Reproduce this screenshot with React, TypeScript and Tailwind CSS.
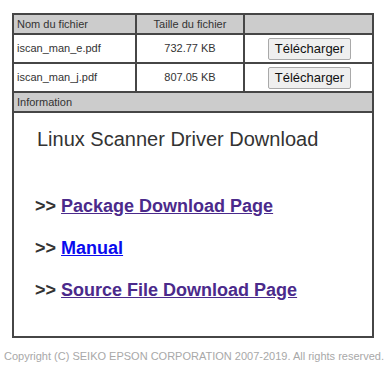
import React from "react";

const files = [
  { name: "iscan_man_e.pdf", size: "732.77 KB" },
  { name: "iscan_man_j.pdf", size: "807.05 KB" },
];

const links = [
  { label: "Package Download Page", visited: true },
  { label: "Manual", visited: false },
  { label: "Source File Download Page", visited: true },
];

const App = () => {
  return (
    <div className="w-[388px] h-[375px] bg-white pt-[13px] font-['Liberation_Sans',Arial,sans-serif] text-[#333]">
      <div className="ml-[12px] w-[362px] grid grid-cols-[121px_106px_127px] gap-[2px] p-[2px] bg-[#464646] text-[11px]">
        <div className="h-[18px] bg-[#cccccc] flex items-center pl-[3px]">Nom du fichier</div>
        <div className="h-[18px] bg-[#cccccc] flex items-center justify-center">Taille du fichier</div>
        <div className="h-[18px] bg-[#cccccc]"></div>

        {files.map((f) => (
          <React.Fragment key={f.name}>
            <div className="h-[27px] bg-white flex items-center pl-[3px]">{f.name}</div>
            <div className="h-[27px] bg-white flex items-center justify-center">{f.size}</div>
            <div className="h-[27px] bg-white flex items-center justify-center">
              <button className="h-[22px] px-[6px] ml-[2px] text-[13px] leading-none text-[#111] bg-[#efefef] border border-[#a9a9a9] rounded-[2px]">
                Télécharger
              </button>
            </div>
          </React.Fragment>
        ))}

        <div className="col-span-3 h-[18px] bg-[#cccccc] flex items-center pl-[3px]">Information</div>

        <div className="col-span-3 h-[223px] bg-white">
          <h1 className="mt-[15px] pl-[23px] text-[20px] leading-[23px]">Linux Scanner Driver Download</h1>
          <div className="mt-[45px] pl-[21px] flex flex-col gap-[21px] text-[18px] leading-[21px] font-bold">
            {links.map((l) => (
              <p key={l.label}>
                &gt;&gt;{" "}
                <a
                  href="#"
                  className={l.visited ? "underline text-[#4b2a8b]" : "underline text-[#0a0aee]"}
                >
                  {l.label}
                </a>
              </p>
            ))}
          </div>
        </div>
      </div>
      <p className="mt-[12px] text-center text-[11px] leading-[13px] text-[#a8a8a8]">
        Copyright (C) SEIKO EPSON CORPORATION 2007-2019. All rights reserved.
      </p>
    </div>
  );
};

export default App;
